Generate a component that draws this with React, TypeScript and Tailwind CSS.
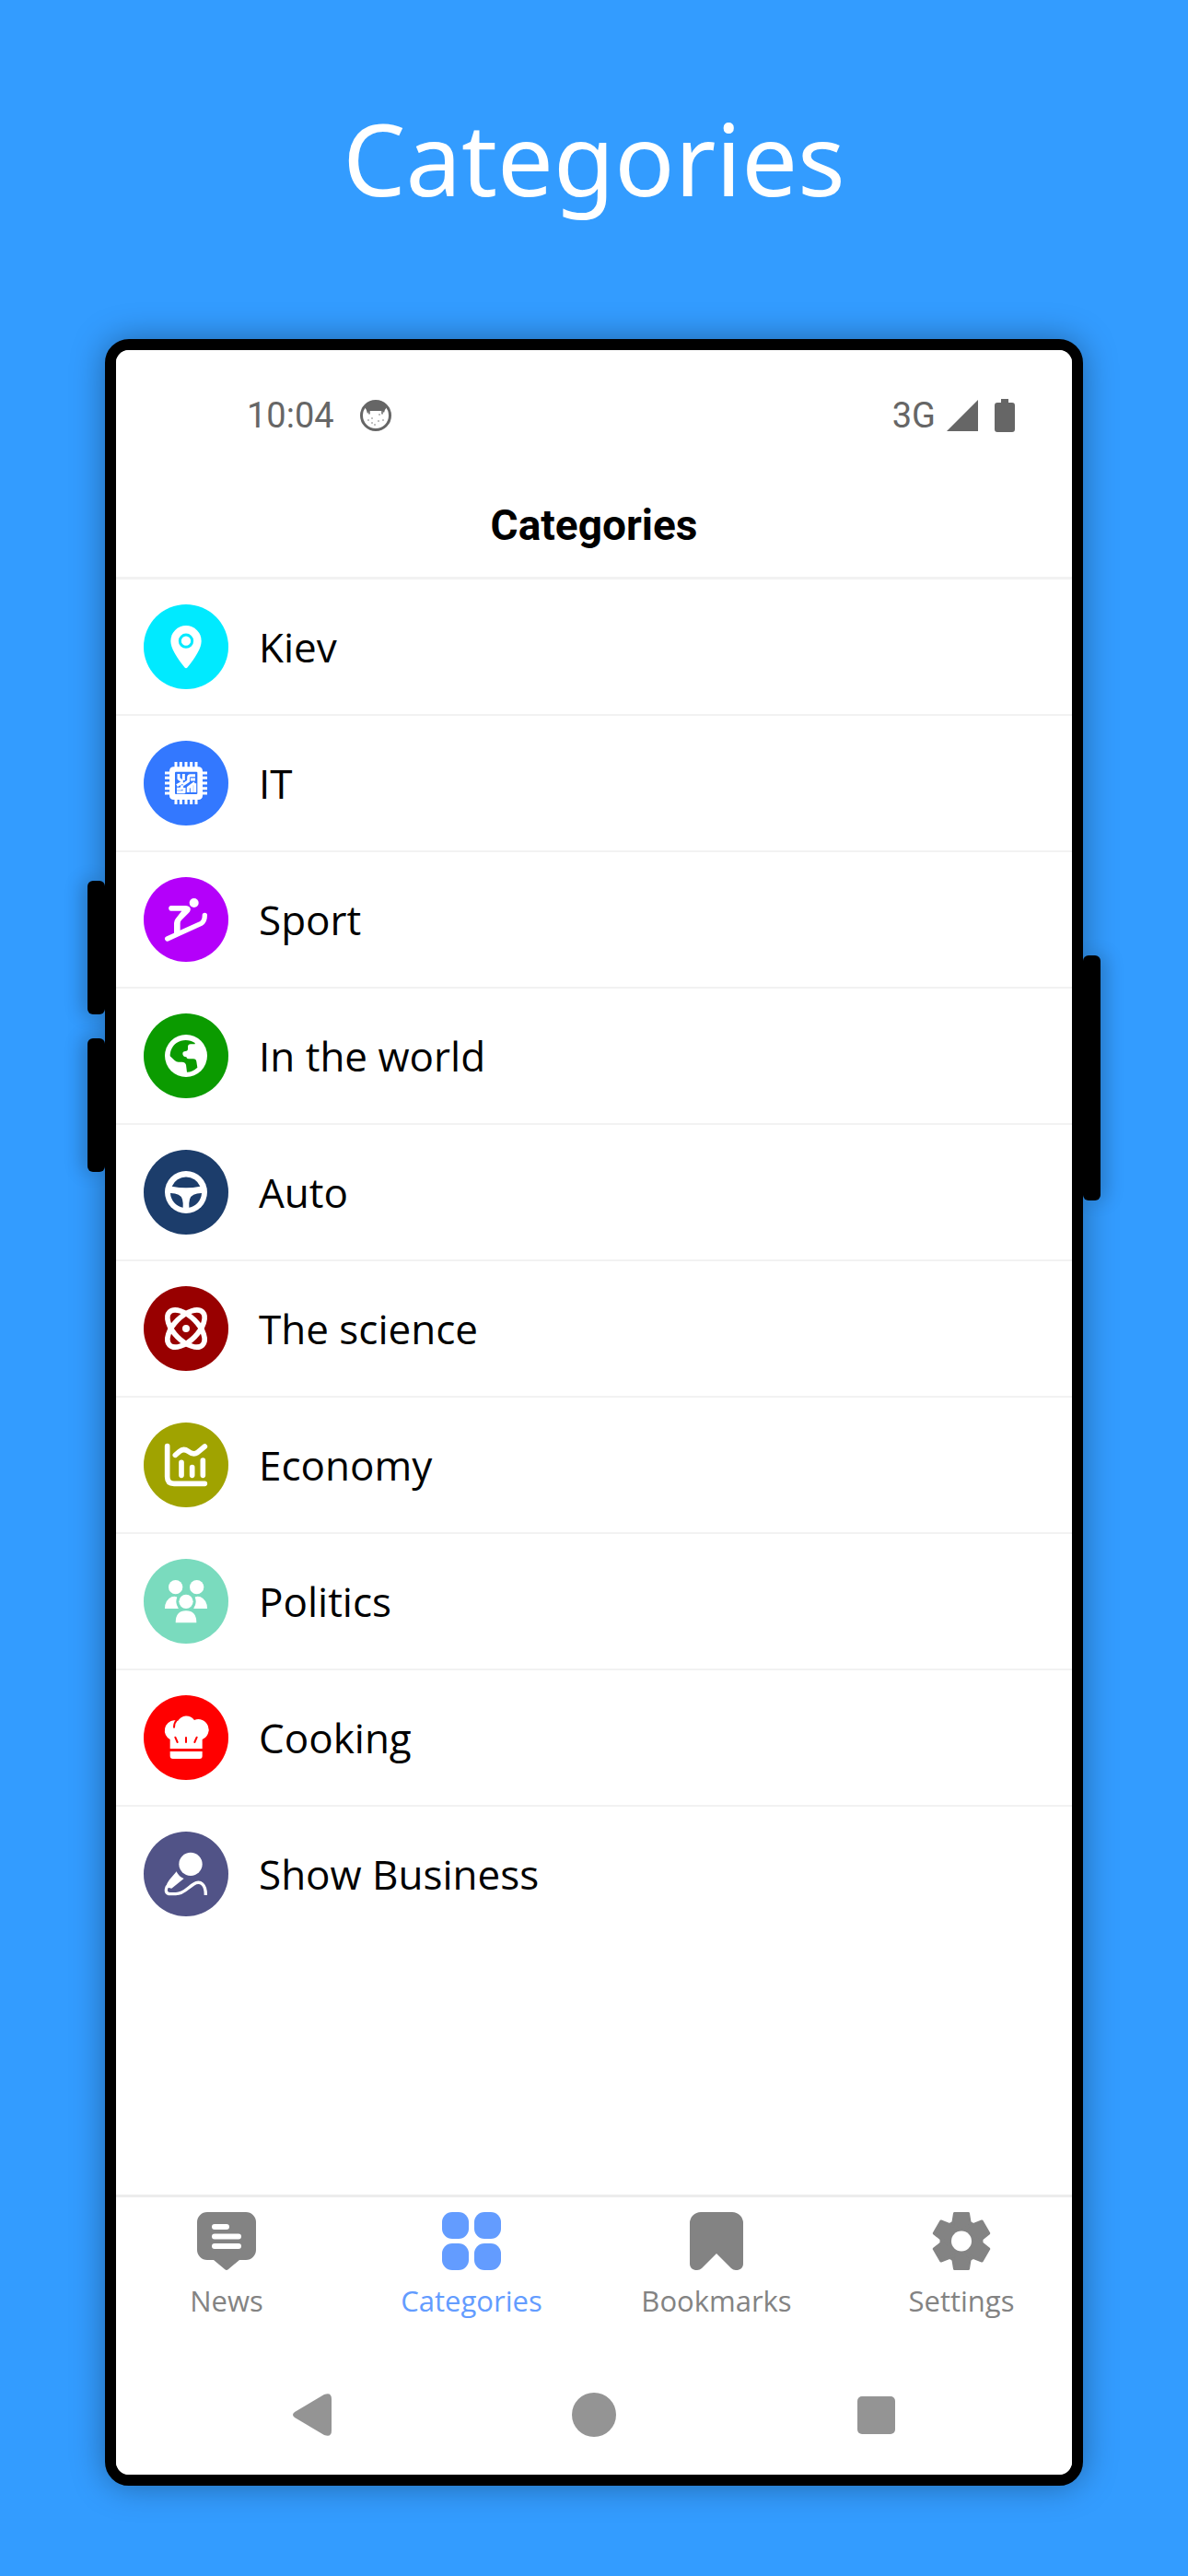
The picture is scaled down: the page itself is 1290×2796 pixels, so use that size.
import { useState } from "react";
import type { ReactNode } from "react";

type Category = {
  name: string;
  color: string;
  icon: ReactNode;
};

const stroke = {
  fill: "none",
  stroke: "currentColor",
  strokeLinecap: "round" as const,
  strokeLinejoin: "round" as const,
};

const categories: Category[] = [
  {
    name: "Kiev",
    color: "bg-[#00eaff]",
    icon: (
      <>
        <path
          fill="currentColor"
          d="M69 0a50 50 0 0 0-50 50c0 22 17 50 45 86q5 6 10 0c28-36 45-64 45-86A50 50 0 0 0 69 0z"
        />
        <circle cx="69" cy="50" r="20" fill="none" stroke="#00eaff" strokeWidth="9" />
      </>
    ),
  },
  {
    name: "IT",
    color: "bg-[#3378ff]",
    icon: (
      <>
        <g {...stroke} strokeLinecap="butt" strokeWidth="9">
          <path d="M36 0v138M52 0v138M69 0v138M86 0v138M102 0v138" />
          <path d="M0 36h138M0 52h138M0 69h138M0 86h138M0 102h138" />
        </g>
        <rect x="15" y="16" width="108" height="107" rx="13" fill="currentColor" />
        <rect x="33" y="32" width="73" height="73" rx="3" fill="#3378ff" />
        <g {...stroke} strokeLinecap="butt" strokeWidth="9">
          <path d="M45 39v15l10 8v6l-16 9M61 39v21M99 44H83q-6 0-6 6v12L59 74M99 57H84" />
          <path d="M39 88h10q7 0 7-7v-5M39 98h24V84M76 99V84l21-16M88 99V78M98 99V70" />
        </g>
      </>
    ),
  },
  {
    name: "Sport",
    color: "bg-[#b400fa]",
    icon: (
      <>
        <circle cx="95" cy="15" r="15" fill="currentColor" />
        <path
          fill="currentColor"
          d="M20 24h47c16 0 22 13 11 23L54 71q-4 4-4 10v35l-20 6V81q0-8 5-14l20-26H20c-10 0-10-17 0-17z"
        />
        <path {...stroke} strokeWidth="16" d="M8 132 118 82q12-6 12-27" />
      </>
    ),
  },
  {
    name: "In the world",
    color: "bg-[#0b9b00]",
    icon: (
      <>
        <circle cx="69" cy="69" r="69" fill="currentColor" />
        <path
          fill="#0b9b00"
          d="M98 27C80 15 56 15 38 27 24 37 17 52 17 70l15 14q5 5 12 5h12q10 0 13 9l3 24q18 0 34-15l-3-19q-1-9-10-9H77q-6 0-7-6-12-2-12-11 0-8 9-8 8 0 8-8v-6q0-9 9-9h14z"
        />
      </>
    ),
  },
  {
    name: "Auto",
    color: "bg-[#1c3d6b]",
    icon: (
      <>
        <circle cx="69" cy="69" r="69" fill="currentColor" />
        <path
          fill="#1c3d6b"
          d="M23 50a50 50 0 0 1 92 0q-46 10-92 0zM18 72q33 0 39 20 3 10 2 27a50 50 0 0 1-41-47zM120 72q-33 0-39 20-3 10-2 27a50 50 0 0 0 41-47z"
        />
      </>
    ),
  },
  {
    name: "The science",
    color: "bg-[#980000]",
    icon: (
      <>
        <g {...stroke} strokeWidth="17">
          <ellipse cx="69" cy="69" rx="76" ry="39" transform="rotate(45 69 69)" />
          <ellipse cx="69" cy="69" rx="76" ry="39" transform="rotate(-45 69 69)" />
        </g>
        <circle cx="69" cy="69" r="12" fill="currentColor" />
      </>
    ),
  },
  {
    name: "Economy",
    color: "bg-[#a0a300]",
    icon: (
      <g {...stroke} strokeWidth="17">
        <path d="M8 8v100q0 22 22 22h100" />
        <path d="M34 37 48 25q13-11 28 0 17 13 30 4l24-20" />
        <path d="M54 61v42M89 77v26M124 54v49" />
      </g>
    ),
  },
  {
    name: "Politics",
    color: "bg-[#7adbbe]",
    icon: (
      <>
        <g fill="currentColor">
          <circle cx="35" cy="23" r="23" />
          <circle cx="104" cy="23" r="23" />
          <path d="M0 93q0-28 22-38 14-5 22 4v34zM138 93q0-28-22-38-14-5-22 4v34z" />
        </g>
        <circle cx="69" cy="70" r="32" fill="#7adbbe" />
        <circle cx="69" cy="70" r="23" fill="currentColor" />
        <path fill="currentColor" d="M35 139q0-39 34-39t34 39z" />
      </>
    ),
  },
  {
    name: "Cooking",
    color: "bg-[#ff0000]",
    icon: (
      <>
        <g fill="currentColor">
          <path d="M17 105V75A33 33 0 0 1 30 13q6-1 12 2a32 32 0 0 1 54-3 33 33 0 0 1 26 63v30z" />
          <path d="M17 114h105v15q0 9-9 9H26q-9 0-9-9z" />
        </g>
        <g {...stroke} stroke="#ff0000" strokeWidth="6">
          <path d="M38 13q-8 8-8 22M34 68l7 16M69 69v15M104 68l-7 16" />
        </g>
      </>
    ),
  },
  {
    name: "Show Business",
    color: "bg-[#515387]",
    icon: (
      <>
        <circle cx="84" cy="37" r="38" fill="currentColor" />
        <path fill="currentColor" d="M38 61q7 16 24 23L22 116 3 112q4-14 12-24z" />
        <path
          {...stroke}
          strokeWidth="10"
          strokeLinecap="butt"
          d="M8 108c-8 16-4 26 10 26h18c26 0 38-20 58-32 22-14 40 2 39 36"
        />
      </>
    ),
  },
];

const tabs = [
  {
    name: "News",
    icon: (
      <>
        <path
          fill="currentColor"
          d="M11 0h42a11 11 0 0 1 11 11v30a11 11 0 0 1-11 11h-7L34 62q-2 2-4 0L18 52h-7A11 11 0 0 1 0 41V11A11 11 0 0 1 11 0z"
        />
        <path stroke="#fff" strokeWidth="6" strokeLinecap="round" d="M19 16h13M19 26.500h26M19 37h26" />
      </>
    ),
  },
  {
    name: "Categories",
    icon: (
      <g fill="currentColor">
        <rect width="29" height="29" rx="11" />
        <rect x="35" width="29" height="29" rx="11" />
        <rect y="34" width="29" height="29" rx="11" />
        <rect x="35" y="34" width="29" height="29" rx="11" />
      </g>
    ),
  },
  {
    name: "Bookmarks",
    icon: (
      <path
        fill="currentColor"
        d="M15 0h34a12 12 0 0 1 12 12v44c0 7-8 9-13 5L32 45 16 61c-5 4-13 2-13-5V12A12 12 0 0 1 15 0z"
      />
    ),
  },
  {
    name: "Settings",
    icon: (
      <>
        <g fill="currentColor" stroke="currentColor" strokeWidth="3" strokeLinejoin="round">
          <circle cx="32" cy="31.500" r="22" />
          <path d="M24.500 1.500h15L42 17v29l-2.500 15.500h-15L22 46V17z" />
          <path d="M24.500 1.500h15L42 17v29l-2.500 15.500h-15L22 46V17z" transform="rotate(60 32 31.500)" />
          <path d="M24.500 1.500h15L42 17v29l-2.500 15.500h-15L22 46V17z" transform="rotate(120 32 31.500)" />
        </g>
        <circle cx="32" cy="31.500" r="11" fill="#fff" />
      </>
    ),
  },
];

function StatusBar() {
  return (
    <div className="flex h-[138px] items-center justify-between pt-1 pr-[62px] pl-[142px] font-['Roboto',sans-serif] text-[38px] text-[#666666]">
      <div className="flex items-center gap-7">
        <span>10:04</span>
        <svg width="34" height="34" viewBox="0 0 34 34" aria-hidden="true">
          <circle cx="17" cy="17" r="15.500" fill="none" stroke="currentColor" strokeWidth="3" />
          <path
            fill="currentColor"
            d="M5 8Q10 1 17 1t12 7q-2 2-3 6l-2-2H10l-2 3Q7 10 5 8z"
          />
          <path
            fill="none"
            stroke="currentColor"
            strokeWidth="1.500"
            strokeLinecap="round"
            d="M10 12v3M24 12v3M9 22h0M13 20h0M21 16h0M20 23h0M25 22h0M16 27h0M13 25h0"
          />
        </svg>
      </div>
      <div className="flex items-center gap-3">
        <span>3G</span>
        <svg width="34" height="34" viewBox="0 0 34 34" aria-hidden="true">
          <path fill="currentColor" d="M0 34 34 0v34z" />
        </svg>
        <svg className="ml-1.5" width="22" height="36" viewBox="0 0 22 36" aria-hidden="true">
          <path
            fill="currentColor"
            d="M7 0h8v4h4q3 0 3 3v26q0 3-3 3H3q-3 0-3-3V7q0-3 3-3h4z"
          />
        </svg>
      </div>
    </div>
  );
}

function CategoryList() {
  return (
    <ul className="flex-1">
      {categories.map(({ name, color, icon }) => (
        <li key={name} className="border-b-2 border-[#f2f2f2] last:border-transparent">
          <a href="#" className="flex h-[146px] items-center gap-[33px] px-[30px]">
            <span className={`flex size-[92px] items-center justify-center rounded-full text-white ${color}`}>
              <svg className="size-[46px] overflow-visible" viewBox="0 0 138 138" aria-hidden="true">
                {icon}
              </svg>
            </span>
            <span className="text-[44px] font-medium text-black">{name}</span>
          </a>
        </li>
      ))}
    </ul>
  );
}

function TabBar() {
  const [active, setActive] = useState("Categories");

  return (
    <nav className="flex justify-between border-t-3 border-[#ececec] px-5 pt-4 pb-[38px]">
      {tabs.map(({ name, icon }) => (
        <button
          key={name}
          type="button"
          onClick={() => setActive(name)}
          className={`flex w-[200px] flex-col items-center gap-3 ${
            active === name ? "text-[#639cff]" : "text-[#838383]"
          }`}
        >
          <svg width="64" height="63" viewBox="0 0 64 63" aria-hidden="true">
            {icon}
          </svg>
          <span className="text-[31px] leading-[42px]">{name}</span>
        </button>
      ))}
    </nav>
  );
}

function SystemNav() {
  return (
    <div className="grid h-[130px] grid-cols-3 px-[60px] text-[#949494]">
      <button type="button" aria-label="Back" className="flex items-center justify-center">
        <svg width="42" height="46" viewBox="0 0 42 46" aria-hidden="true">
          <path fill="currentColor" d="M2 20 34 1q8-3 8 5v34q0 8-8 5L2 26q-4-3 0-6z" />
        </svg>
      </button>
      <button type="button" aria-label="Home" className="flex items-center justify-center">
        <span className="size-12 rounded-full bg-[#949494]" />
      </button>
      <button type="button" aria-label="Recent apps" className="flex items-center justify-center">
        <span className="size-[41px] rounded-[5px] bg-[#949494]" />
      </button>
    </div>
  );
}

export default function App() {
  return (
    <div className="flex min-h-screen flex-col bg-[#339cff] px-[114px] pt-[98px] pb-[98px] font-['Open_Sans',sans-serif]">
      <h1 className="mb-[122px] text-center font-['Noto_Sans',sans-serif] text-[108px] leading-[148px] text-white">
        Categories
      </h1>

      <div className="relative flex flex-1 flex-col rounded-[26px] border-12 border-black bg-white shadow-[0_0_36px_rgba(0,0,0,0.35)]">
        {/* Side buttons */}
        <span className="absolute top-[576px] -left-[31px] h-[145px] w-[19px] rounded-[6px] bg-black shadow-[-6px_0_20px_rgba(0,0,0,0.2)]" />
        <span className="absolute top-[747px] -left-[31px] h-[145px] w-[19px] rounded-[6px] bg-black shadow-[-6px_0_20px_rgba(0,0,0,0.2)]" />
        <span className="absolute top-[657px] -right-[31px] h-[266px] w-[19px] rounded-[6px] bg-black shadow-[6px_0_20px_rgba(0,0,0,0.2)]" />

        <div className="relative flex flex-1 flex-col rounded-[14px] bg-white">
          <StatusBar />
          <header className="flex h-[111px] items-center justify-center border-b-3 border-[#f2f2f2] pb-1">
            <h2 className="font-['Roboto',sans-serif] text-[46px] font-bold text-black">Categories</h2>
          </header>
          <CategoryList />
          <TabBar />
          <SystemNav />
        </div>
      </div>
    </div>
  );
}
